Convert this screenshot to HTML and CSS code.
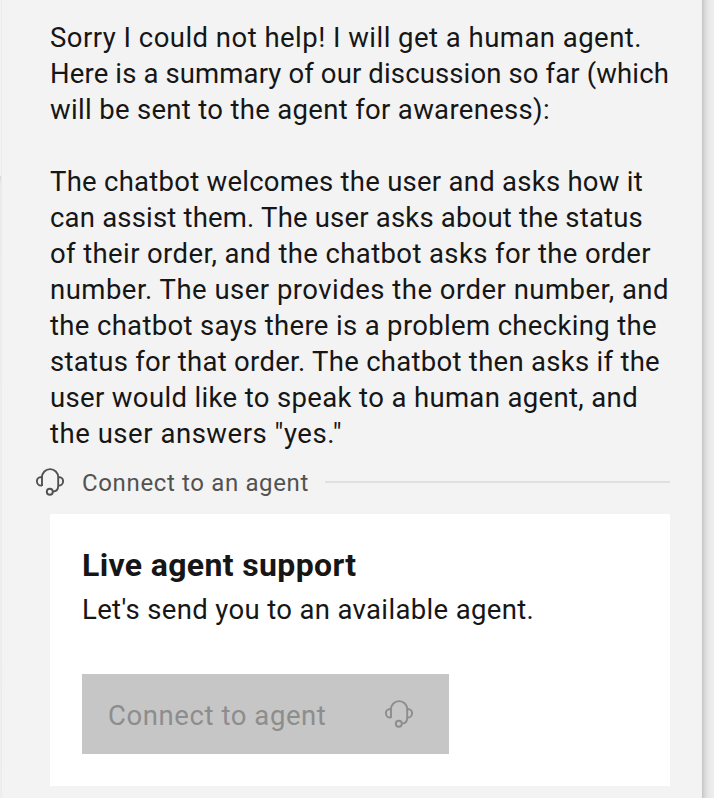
FILE: index.html
```
<!DOCTYPE html>
<html lang="en">
<head><meta charset="utf-8"><title>Chat</title><link rel="stylesheet" href="styles.css"></head>
<body>
<div class="edge-left"></div>
<main class="panel">
<div class="message">
<p><span class="line t1">Sorry I could not help! I will get a human agent.</span>
<span class="line t2">Here is a summary of our discussion so far (which</span>
<span class="line t3">will be sent to the agent for awareness):</span></p>
<p><span class="line t4">The chatbot welcomes the user and asks how it</span>
<span class="line t5">can assist them. The user asks about the status</span>
<span class="line t6">of their order, and the chatbot asks for the order</span>
<span class="line t7">number. The user provides the order number, and</span>
<span class="line t8">the chatbot says there is a problem checking the</span>
<span class="line t9">status for that order. The chatbot then asks if the</span>
<span class="line t10">user would like to speak to a human agent, and</span>
<span class="line t11">the user answers "yes."</span></p>
</div>
<div class="divider"><svg class="icon" viewBox="0 0 28 28"><path d="M6 18V9.2a8.1 8.1 0 0 1 16.2 0v8.3q0 6-5.2 6M6 9h-.8a4.2 4.2 0 0 0 0 8.6H6M22.2 9h.6a4.2 4.2 0 0 1 0 8.6h-.6"/><circle cx="13.8" cy="23.8" r="3"/></svg><span class="label">Connect to an agent</span><span class="rule"></span></div>
<section class="card">
<h2>Live agent support</h2>
<p class="sub">Let's send you to an available agent.</p>
<button disabled><span>Connect to agent</span><svg class="icon" viewBox="0 0 28 28"><path d="M6 18V9.2a8.1 8.1 0 0 1 16.2 0v8.3q0 6-5.2 6M6 9h-.8a4.2 4.2 0 0 0 0 8.6H6M22.2 9h.6a4.2 4.2 0 0 1 0 8.6h-.6"/><circle cx="13.8" cy="23.8" r="3"/></svg></button>
</section>
</main>
<div class="edge-right"></div>
</body></html>
```
FILE: styles.css
```
*{box-sizing:border-box}
body{display:flex;margin:0;width:714px;height:798px;overflow:hidden;background:#eee;font-family:Roboto,sans-serif;color:#161616}
.edge-left{width:2px;background:linear-gradient(#f3f3f3 176px,#d8d8d8 176px,#ececec 186px,#efefef);border-right:1px solid #ebebeb}
.edge-right{width:12px;background:linear-gradient(90deg,#c4c4c4,#d4d4d4 2px,#e2e2e2 5px,#eaeaea 8px,#eee)}
.panel{width:700px;height:798px;background:#f3f3f3;padding:20px 32px 0 48px}
.message{font-size:27.5px;line-height:36px}
.message p{margin:0 0 36px}
.message p:last-child{margin:0}
.line{display:block;white-space:nowrap}
.t1{letter-spacing:.469px}
.t2{letter-spacing:.129px}
.t3{letter-spacing:.318px}
.t4{letter-spacing:.259px}
.t5{letter-spacing:.191px}
.t6{letter-spacing:.38px}
.t7{letter-spacing:.481px}
.t8{letter-spacing:.338px}
.t9{letter-spacing:.28px}
.t10{letter-spacing:.355px}
.t11{letter-spacing:.533px}
.divider{display:flex;align-items:center;height:62px;margin-left:-14px;padding-bottom:2px;color:#525252;font-size:24px}
.icon{width:28px;height:28px;fill:none;stroke:currentColor;stroke-width:1.9;flex:none}
.label{margin:0 16px 0 18px;padding-top:2px;letter-spacing:.642px}
.rule{height:2px;flex:1;background:#e0e0e0}
.card{height:272px;background:#fff;padding:31px 32px}
h2{font-size:32px;line-height:40px;margin:0;letter-spacing:.35px}
.sub{font-size:27.5px;line-height:36px;margin:7px 0 46px;letter-spacing:.35px}
button{display:flex;align-items:center;justify-content:space-between;width:367px;height:80px;border:0;padding:0 36px 0 26px;background:#c6c6c6;color:#8d8d8d;font:27.5px Roboto,sans-serif;letter-spacing:.58px}
button span{padding-top:2px}
```
